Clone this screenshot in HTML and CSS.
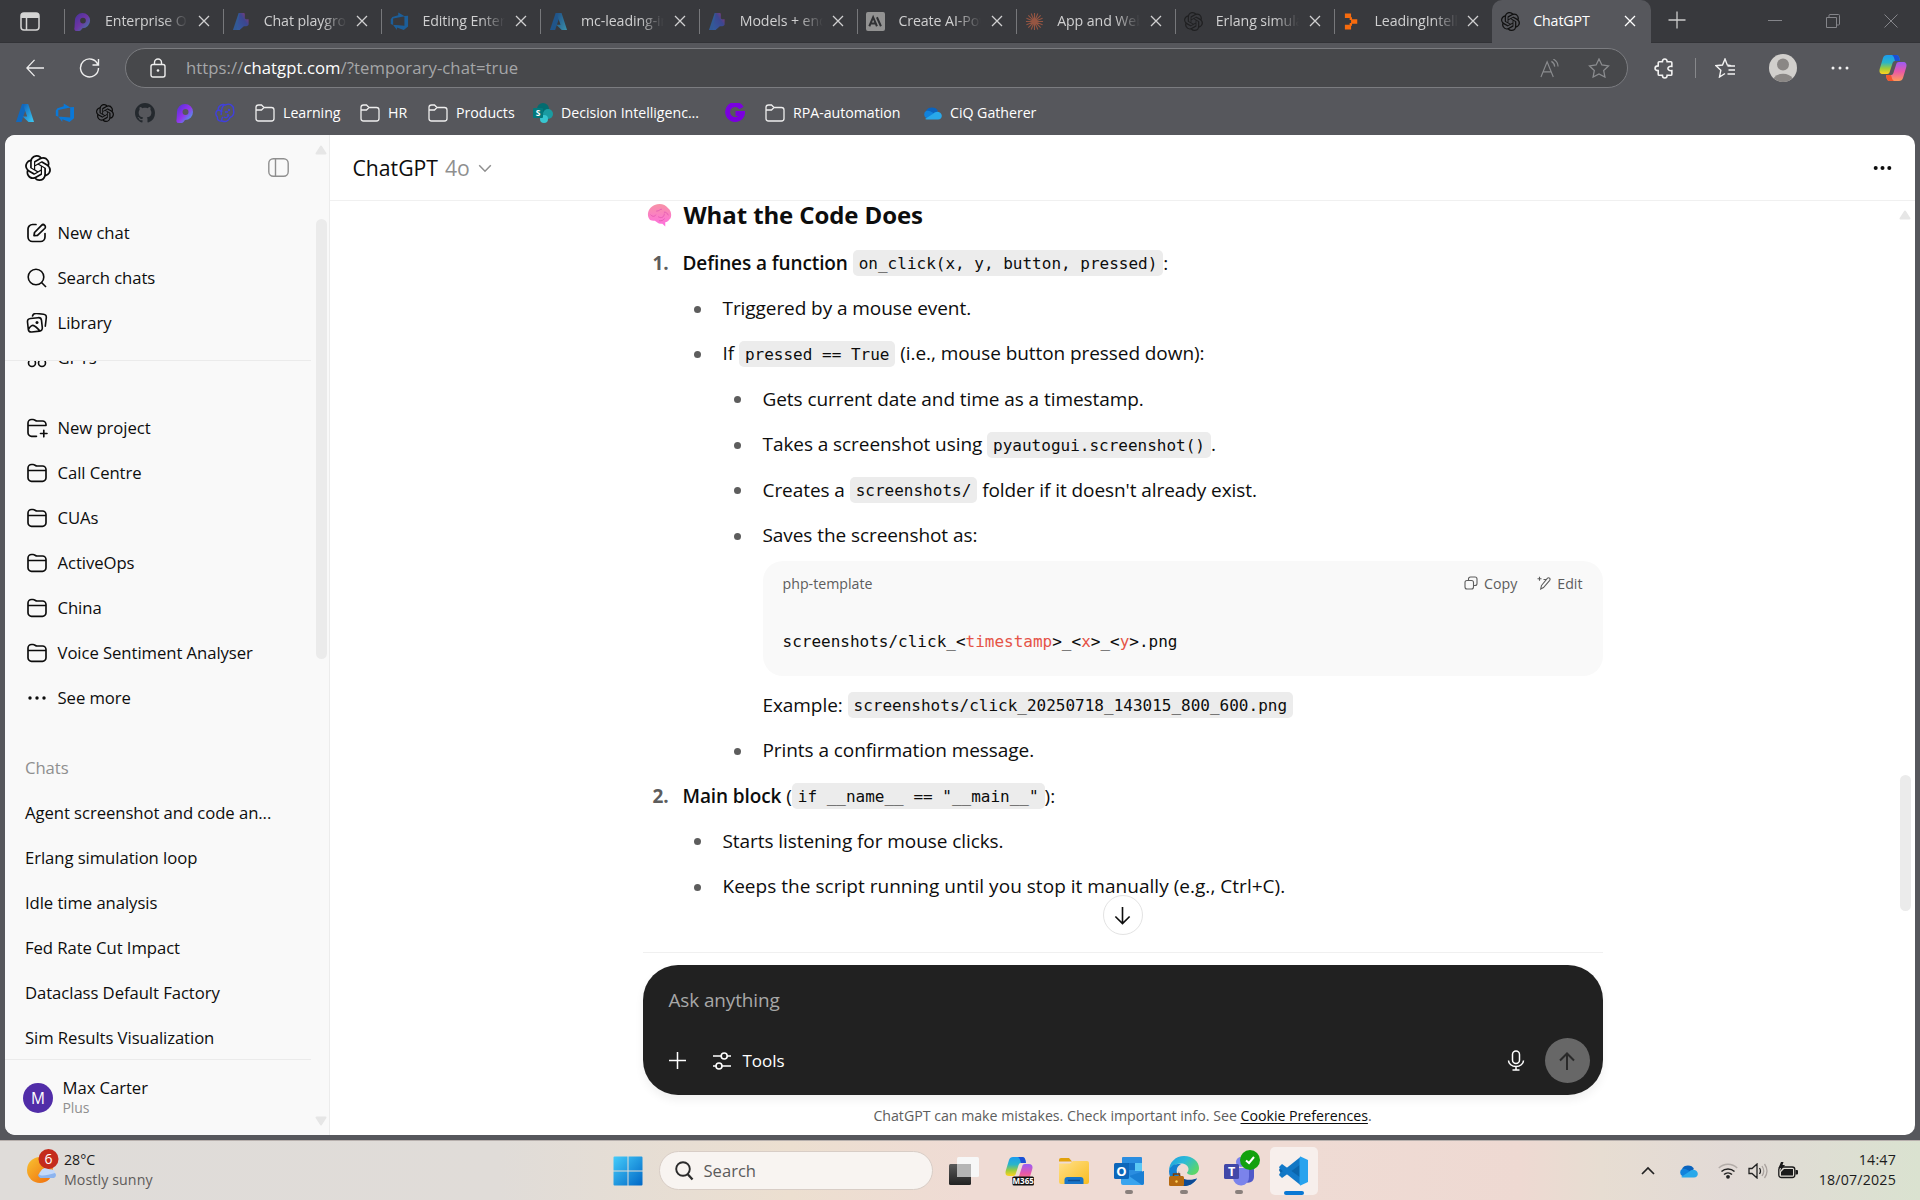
FILE: index.html
```html
<!DOCTYPE html>
<html lang="en">
<head>
<meta charset="utf-8">
<title>ChatGPT</title>
<link rel="stylesheet" href="styles.css">
</head>
<body>
<svg class="sprite" width="0" height="0" aria-hidden="true">
  <defs>
    <linearGradient id="g-loop" x1="0" y1="0" x2="1" y2="1"><stop offset="0" stop-color="#4b2fd6"/><stop offset=".5" stop-color="#9333ea"/><stop offset="1" stop-color="#35c7e8"/></linearGradient>
    <linearGradient id="g-az" x1="0" y1="0" x2="1" y2="1"><stop offset="0" stop-color="#0f5fb8"/><stop offset="1" stop-color="#3ccbf4"/></linearGradient>
    <linearGradient id="g-found" x1="0" y1="1" x2="1" y2="0"><stop offset="0" stop-color="#2f74e0"/><stop offset=".6" stop-color="#3f50c8"/><stop offset="1" stop-color="#e0338c"/></linearGradient>
    <linearGradient id="g-copa" x1="0" y1="0" x2="0" y2="1"><stop offset="0" stop-color="#1b9cf0"/><stop offset=".4" stop-color="#2ab5c8"/><stop offset=".7" stop-color="#9ccb3c"/><stop offset="1" stop-color="#ffd21f"/></linearGradient>
    <linearGradient id="g-copb" x1="0" y1="0" x2="0" y2="1"><stop offset="0" stop-color="#9a5cf5"/><stop offset=".5" stop-color="#e858a8"/><stop offset="1" stop-color="#ff9a5a"/></linearGradient>
    <linearGradient id="g-win" x1="0" y1="0" x2="1" y2="1"><stop offset="0" stop-color="#45ccfa"/><stop offset="1" stop-color="#0067c6"/></linearGradient>
    <linearGradient id="g-sun" x1="0" y1="0" x2="1" y2="1"><stop offset="0" stop-color="#f8c331"/><stop offset="1" stop-color="#f06a0c"/></linearGradient>
    <linearGradient id="g-fold" x1="0" y1="0" x2="1" y2="1"><stop offset="0" stop-color="#ffe08a"/><stop offset="1" stop-color="#f9bd20"/></linearGradient>
    <linearGradient id="g-edge" x1="0" y1="0" x2="1" y2=".6"><stop offset="0" stop-color="#1f9fe0"/><stop offset=".5" stop-color="#2cbad8"/><stop offset="1" stop-color="#5bd66a"/></linearGradient>
    <linearGradient id="g-brain" x1="0" y1="0" x2="0" y2="1"><stop offset="0" stop-color="#f792a6"/><stop offset="1" stop-color="#ff6fe0"/></linearGradient>
    <linearGradient id="g-dark" x1="0" y1="0" x2="0" y2="1"><stop offset="0" stop-color="#5a5a5a"/><stop offset="1" stop-color="#222"/></linearGradient>
  </defs>
  <symbol id="openai" viewBox="0 0 24 24"><path fill="currentColor" d="M22.2819 9.8211a5.9847 5.9847 0 0 0-.5157-4.9108 6.0462 6.0462 0 0 0-6.5098-2.9A6.0651 6.0651 0 0 0 4.9807 4.1818a5.9847 5.9847 0 0 0-3.9977 2.9 6.0462 6.0462 0 0 0 .7427 7.0966 5.98 5.98 0 0 0 .511 4.9107 6.051 6.051 0 0 0 6.5146 2.9001A5.9847 5.9847 0 0 0 13.2599 24a6.0557 6.0557 0 0 0 5.7718-4.2058 5.9894 5.9894 0 0 0 3.9977-2.9001 6.0557 6.0557 0 0 0-.7475-7.0729zm-9.022 12.6081a4.4755 4.4755 0 0 1-2.8764-1.0408l.1419-.0804 4.7783-2.7582a.7948.7948 0 0 0 .3927-.6813v-6.7369l2.02 1.1686a.071.071 0 0 1 .038.0615v5.5826a4.504 4.504 0 0 1-4.4945 4.4944zm-9.6607-4.1254a4.4708 4.4708 0 0 1-.5346-3.0137l.142.0852 4.783 2.7582a.7712.7712 0 0 0 .7806 0l5.8428-3.3685v2.3324a.0804.0804 0 0 1-.0332.0615L9.74 19.9502a4.4992 4.4992 0 0 1-6.1408-1.6464zM2.3408 7.8956a4.485 4.485 0 0 1 2.3655-1.9728V11.6a.7664.7664 0 0 0 .3879.6765l5.8144 3.3543-2.0201 1.1685a.0757.0757 0 0 1-.071 0l-4.8303-2.7865A4.504 4.504 0 0 1 2.3408 7.872zm16.5963 3.8558L13.1038 8.364 15.1192 7.2a.0757.0757 0 0 1 .071 0l4.8303 2.7913a4.4944 4.4944 0 0 1-.6765 8.1042v-5.6772a.79.79 0 0 0-.407-.667zm2.0107-3.0231l-.142-.0852-4.7735-2.7818a.7759.7759 0 0 0-.7854 0L9.409 9.2297V6.8974a.0662.0662 0 0 1 .0284-.0615l4.8303-2.7866a4.4992 4.4992 0 0 1 6.6802 4.66zM8.3065 12.863l-2.02-1.1638a.0804.0804 0 0 1-.038-.0567V6.0742a4.4992 4.4992 0 0 1 7.3757-3.4537l-.142.0805L8.704 5.459a.7948.7948 0 0 0-.3927.6813zm1.0976-2.3654l2.602-1.4998 2.6069 1.4998v2.9994l-2.5974 1.4997-2.6067-1.4997Z"/></symbol>
  <symbol id="x" viewBox="0 0 12 12"><path d="M1 1l10 10M11 1L1 11" stroke="currentColor" stroke-width="1.3" fill="none"/></symbol>
  <symbol id="loop" viewBox="0 0 20 20"><path fill="url(#g-loop)" fill-rule="evenodd" d="M10 1a8 8 0 1 1 0 16L8.500 19Q7.700 20 6.500 20H3.500C1.500 20 1 18 1.600 16L2 9a8 8 0 0 1 8-8zM10.500 6a3 3 0 1 0 0 6 3 3 0 0 0 0-6z"/></symbol>
  <symbol id="foundry" viewBox="0 0 20 20"><path fill="#2f6fd0" d="M7 1h5L8 19H1z"/><path fill="url(#g-found)" d="M8 1h4c1 0 1.500.5 1.500 1.500V6c0 1 .5 1.500 1.500 1.500h2.500V13c0 1-1 2-2.500 2h-2.500L8 19H5z"/></symbol>
  <symbol id="devops" viewBox="0 0 20 20"><path fill="#0a78d7" d="M19 4v11.200L14.500 19 7.300 16.300v2.600L3.200 13.500l12 1V4.300zM15.400 4.400 8.700.6v2.700L2.500 5.200.8 7.500v5.200l2.500 1.100V6.900z"/></symbol>
  <symbol id="azure" viewBox="0 0 20 20"><path fill="#1168bd" d="M7 1h5.500L6.500 19H1z"/><path fill="url(#g-az)" d="M8 1h5.200L19 19h-5.500L7.600 13.500h4.600L9.500 6z"/></symbol>
  <symbol id="folder" viewBox="0 0 20 20"><path fill="none" stroke="#eee" stroke-width="1.300" d="M1 4.500A2.500 2.500 0 0 1 3.500 2h3l2.500 2.500h7.500A2.500 2.500 0 0 1 19 7v8.500a2.500 2.500 0 0 1-2.500 2.500h-13A2.500 2.500 0 0 1 1 15.500zM1 7h5.500l2.500-2.500"/></symbol>
  <symbol id="cloud" viewBox="0 0 20 14"><path fill="#0b63bd" d="M4 5a6.500 5.500 0 0 1 12 0l-5 4z"/><path fill="#1182dc" d="M4 5c3-1 5 .5 7.500 2L18 12H4.500A4 4 0 0 1 4 5z"/><path fill="#28a8ea" d="M3 13l8.500-5.500C13 5.500 18 4.500 19.500 8.500 20.500 11 19 13.500 16 13.500H4.500z"/></symbol>
  <symbol id="proj" viewBox="0 0 22 20"><path fill="none" stroke="currentColor" stroke-width="1.650" stroke-linejoin="round" d="M2 7.500V5A3.500 3.500 0 0 1 5.500 1.500h1.600c1.500 0 2.400 1.500 4 1.500h5.400A3.500 3.500 0 0 1 20 6.500v8.300a3.500 3.500 0 0 1-3.500 3.500h-11A3.500 3.500 0 0 1 2 14.800V7.500h18"/></symbol>
  <symbol id="copilot" viewBox="0 0 28 28"><path fill="url(#g-copa)" d="M8 1h9c3 0 3.500 3 4 6h-5c-2 0-2.500 2-3 4l-2 6c-.5 2-1 3-3 3H4c-3 0-4-2-3.300-5L4 4c.6-2 2-3 4-3z"/><path fill="#1b4fd6" d="M13 1h4.500c2.500 0 3 3 3.500 6h-5c-1-3-1-5-3-6z"/><path fill="url(#g-copb)" d="M20 27h-9c-3 0-3.500-3-4-6h5c2 0 2.500-2 3-4l2-6c.5-2 1-3 3-3h4c3 0 4 2 3.300 5L24 24c-.6 2-2 3-4 3z"/><path fill="#f2562e" d="M15 27h-4.500c-2.500 0-3-3-3.500-6h5c1 3 1 5 3 6z"/></symbol>
</svg>

<div class="tabs">
  <svg class="tabmenu" viewBox="0 0 20 20"><rect x="1" y="2" width="18" height="17" rx="3" fill="none" stroke="#d4d4d4" stroke-width="1.500"/><path d="M1 7V4.500A2.500 2.500 0 0 1 3.500 2h13A2.500 2.500 0 0 1 19 4.500V7z" fill="#d4d4d4"/><path d="M6.500 7v12" stroke="#d4d4d4" stroke-width="1.500"/></svg>
  <div class="tab"><svg class="fav"><use href="#loop"/></svg><span>Enterprise Op</span><svg class="cls"><use href="#x"/></svg></div>
  <div class="tab"><svg class="fav"><use href="#foundry"/></svg><span>Chat playgrou</span><svg class="cls"><use href="#x"/></svg></div>
  <div class="tab"><svg class="fav"><use href="#devops"/></svg><span>Editing Enterp</span><svg class="cls"><use href="#x"/></svg></div>
  <div class="tab"><svg class="fav"><use href="#azure"/></svg><span>mc-leading-in</span><svg class="cls"><use href="#x"/></svg></div>
  <div class="tab"><svg class="fav"><use href="#foundry"/></svg><span>Models + end</span><svg class="cls"><use href="#x"/></svg></div>
  <div class="tab"><svg class="fav lit" viewBox="0 0 20 20"><rect width="20" height="20" rx="2" fill="#929292"/><path d="M3.500 15 7.500 5.500 11.500 15M5 12h5M11.500 5.500 15.700 15" fill="none" stroke="#303134" stroke-width="2.100"/></svg><span>Create AI-Pow</span><svg class="cls"><use href="#x"/></svg></div>
  <div class="tab"><svg class="fav lit" viewBox="-10 -10 20 20"><path d="M0-9V9M-9 0H9M-6.500-6.500 6.500 6.500M6.500-6.500-6.500 6.500M-3.500-8.500 3.500 8.500M3.500-8.500-3.500 8.500M-8.500-3.500 8.500 3.500M-8.500 3.500 8.500-3.500" stroke="#955542" stroke-width="1.200"/></svg><span>App and Web</span><svg class="cls"><use href="#x"/></svg></div>
  <div class="tab"><svg class="fav gpt"><use href="#openai"/></svg><span>Erlang simula</span><svg class="cls"><use href="#x"/></svg></div>
  <div class="tab"><svg class="fav lit" viewBox="0 0 20 20"><path fill="#f76b0e" d="M2 1.500h6.500v4.800H2zM2 13.500h6.500v4.800H2zM8.500 7.500H15v4.800H8.500z"/><path fill="#f76b0e" d="M7 5.500h2.500v3H7zM7 11.500h2.500v3H7z"/></svg><span>LeadingIntelli</span><svg class="cls"><use href="#x"/></svg></div>
  <div class="tab active"><svg class="fav gpt lit"><use href="#openai"/></svg><span>ChatGPT</span><svg class="cls"><use href="#x"/></svg></div>
  <svg class="plus" viewBox="0 0 18 18"><path d="M9 .5v17M.5 9h17" stroke="#ccc" stroke-width="1.300"/></svg>
  <div class="wincontrols">
    <svg viewBox="0 0 14 14"><path d="M0 6.500h14" stroke="#84858a"/></svg>
    <svg viewBox="0 0 14 14"><path d="M.5 3.500h10v10H.5zM3 3V1.500Q3 .5 4 .5h8.500q1 0 1 1V10q0 1-1 1H11" fill="none" stroke="#84858a"/></svg>
    <svg viewBox="0 0 14 14"><path d="M.5.5l13 13M13.500.5l-13 13" stroke="#84858a"/></svg>
  </div>
</div>

<div class="toolbar">
  <svg class="back" viewBox="0 0 20 20"><path d="M20 10H1M9.500 1 1 10l8.500 9" fill="none" stroke="#eee" stroke-width="1.400"/></svg>
  <svg class="reload" viewBox="0 0 20 20"><path d="M18.500 7A9 9 0 1 0 19 10M19 1v6h-6" fill="none" stroke="#eee" stroke-width="1.400"/></svg>
  <div class="address">
    <svg class="lock" viewBox="0 0 16 20"><rect x="1" y="6.500" width="14" height="12.500" rx="2" fill="none" stroke="#eee" stroke-width="1.400"/><path d="M4.500 6.500V4.500a3.500 3.500 0 0 1 7 0v2" fill="none" stroke="#eee" stroke-width="1.400"/><circle cx="8" cy="12.500" r="1.300" fill="#eee"/></svg>
    <span class="url">https://<b>chatgpt.com</b>/?temporary-chat=true</span>
    <svg class="read" viewBox="0 0 20 20"><path d="M1 19 7.500 3 14 19M3.300 13.500h8.400M12 2.500c2 1 3.300 3 3.500 5.500M14 0c3 1.700 5 4.700 5 8" fill="none" stroke="#8b8c8f" stroke-width="1.200"/></svg>
    <svg class="star" viewBox="0 0 22 20"><path d="M11 1l2.900 6 6.600.9-4.800 4.600 1.200 6.500L11 15.900 5.100 19l1.200-6.500L1.500 7.900 8.100 7z" fill="none" stroke="#8b8c8f" stroke-width="1.300"/></svg>
  </div>
  <svg class="ext" viewBox="0 0 20 20"><path d="M6 3.500h2C8 0 12.500 0 12.500 3.500H16q1 0 1 1V8c-5-.8-5 4.800 0 4v3.500q0 1-1 1h-3.500c0 3.500-4.500 3.500-4.500 0H5q-1 0-1-1V12c-4 0-4-4.500 0-4.500v-3q0-1 1-1z" fill="none" stroke="#f2f2f2" stroke-width="1.500"/></svg>
  <i class="vline"></i>
  <svg class="favs" viewBox="0 0 21 20"><path d="M16 7.800 12.300 7 10 1 7.500 7 1 7.700l4.800 4.600L4.500 19 10 15.500M12.500 8H20M13.500 12H20M12.500 16H20" fill="none" stroke="#f2f2f2" stroke-width="1.400"/></svg>
  <svg class="me" viewBox="0 0 28 28"><circle cx="14" cy="14" r="14" fill="#d1cfcc"/><circle cx="14" cy="10.500" r="6" fill="#8a8785"/><path d="M4.500 24.300a10.500 8 0 0 1 19 0A14 14 0 0 1 4.500 24.300z" fill="#8a8785"/></svg>
  <svg class="more" viewBox="0 0 18 4"><g fill="#f2f2f2"><circle cx="2" cy="2" r="1.500"/><circle cx="9" cy="2" r="1.500"/><circle cx="16" cy="2" r="1.500"/></g></svg>
  <svg class="cop"><use href="#copilot"/></svg>
</div>

<div class="bookmarks">
  <svg><use href="#azure"/></svg>
  <svg><use href="#devops"/></svg>
  <svg class="dark"><use href="#openai"/></svg>
  <svg viewBox="0 0 16 16"><path fill="#24292e" d="M8 0C3.580 0 0 3.580 0 8c0 3.540 2.290 6.530 5.470 7.590.4.070.55-.17.55-.38 0-.19-.01-.82-.01-1.490-2.010.37-2.530-.49-2.690-.94-.09-.23-.48-.94-.82-1.130-.28-.15-.68-.52-.01-.53.63-.01 1.080.58 1.230.82.72 1.210 1.870.87 2.330.66.070-.52.28-.87.51-1.070-1.780-.2-3.640-.89-3.640-3.950 0-.87.31-1.590.82-2.150-.08-.2-.36-1.020.08-2.120 0 0 .67-.21 2.200.82.64-.18 1.320-.27 2-.27s1.360.09 2 .27c1.530-1.040 2.200-.82 2.200-.82.44 1.100.16 1.920.08 2.120.51.56.82 1.270.82 2.150 0 3.070-1.870 3.750-3.650 3.950.29.25.54.73.54 1.480 0 1.070-.01 1.930-.01 2.200 0 .21.15.46.55.38A8.010 8.010 0 0 0 16 8c0-4.420-3.580-8-8-8z"/></svg>
  <svg><use href="#loop"/></svg>
  <svg viewBox="0 0 20 20"><path d="M7 18c-3 .5-5-1-4.500-4C0 12 .5 8 3 7c0-4 4-6.500 7.500-5C15-.5 19 3 18.500 7c1 4-1 6.500-3.500 7.500-2 4-5.500 4.500-8 3.500zM9 2c-2 2-3 4-2 7m-4-2c3 0 4 2 3 5m4-3h3m-1 3h2m-5 2c2 1.500 4 0 5-2M7 18c-1-2 0-3 1-4" fill="none" stroke="#4040dc" stroke-width="1.400"/><circle cx="14" cy="7" r="1.200" fill="#4040dc"/></svg>
  <div class="bm b1"><svg><use href="#folder"/></svg>Learning</div>
  <div class="bm b2"><svg><use href="#folder"/></svg>HR</div>
  <div class="bm b3"><svg><use href="#folder"/></svg>Products</div>
  <div class="bm b4"><svg viewBox="0 0 20 20"><circle cx="10" cy="6" r="6" fill="#036c70"/><circle cx="15" cy="11" r="5" fill="#1a9ba1"/><circle cx="11" cy="16" r="4" fill="#37c6d0"/><rect x="0" y="5" width="10" height="10" rx="1" fill="#03787c"/><text x="5" y="13" font-size="8.500" text-anchor="middle" fill="#fff" font-weight="700">S</text></svg>Decision Intelligenc...</div>
  <svg class="gee" viewBox="0 0 20 20"><path d="M16.500 5A7.500 7.500 0 1 0 17.500 10.500H10.500" fill="none" stroke="#7a00df" stroke-width="5"/></svg>
  <div class="bm b5"><svg><use href="#folder"/></svg>RPA-automation</div>
  <div class="bm b6"><svg><use href="#cloud"/></svg>CiQ Gatherer</div>
</div>

<div class="page">
  <aside class="side">
    <div class="sidecol">
      <div class="sidehead">
        <svg class="logo"><use href="#openai"/></svg>
        <svg class="toggle" viewBox="0 0 21 19"><rect x=".8" y=".8" width="19.400" height="17.400" rx="4.500" fill="none" stroke="#8f8f8f" stroke-width="1.400"/><path d="M7.500 1v17" stroke="#8f8f8f" stroke-width="1.400"/></svg>
      </div>
      <div class="row"><svg viewBox="0 0 22 20"><path d="M10 1.500H6.500A4.500 4.500 0 0 0 2 6v8a4.500 4.500 0 0 0 4.500 4.500h8A4.500 4.500 0 0 0 19 14v-3.500M8 12.700l.5-3.200 7-7.200a2.200 2.200 0 0 1 3.200 3.200l-7.200 6.800z" fill="none" stroke="currentColor" stroke-width="1.700" stroke-linejoin="round" stroke-linecap="round"/></svg>New chat</div>
      <div class="row"><svg viewBox="0 0 22 20"><circle cx="10" cy="9" r="7.800" fill="none" stroke="currentColor" stroke-width="1.600"/><path d="M15.500 14.500l4.500 4.500" stroke="currentColor" stroke-width="1.600"/></svg>Search chats</div>
      <div class="row"><svg viewBox="0 0 22 20"><path d="M4.500 5.500 12 4.700c2-.2 3.300.8 3.500 2.700l.8 7.200c.2 2-.8 3.300-2.800 3.500l-7.700.9c-2 .2-3.300-.8-3.500-2.700L1.500 9c-.2-2 .9-3.300 3-3.500zM2.300 16.500c2-3.500 4-5 6.200-3.500 2 1.200 3 2.500 5.500 5M6.500 3C7 1 8.500.3 10.500.5l7 .7c2 .2 3 1.500 2.800 3.500l-1 8.500" fill="none" stroke="currentColor" stroke-width="1.600" stroke-linecap="round"/><circle cx="11" cy="9.500" r="1.500" fill="currentColor"/></svg>Library</div>
      <div class="scroller">
        <div class="row clipped"><svg viewBox="0 0 22 20"><g fill="none" stroke="currentColor" stroke-width="1.600"><circle cx="6" cy="5" r="3.500"/><circle cx="16" cy="5" r="3.500"/><circle cx="6" cy="15" r="3.500"/><circle cx="16" cy="15" r="3.500"/></g></svg>GPTs</div>
        <div class="row gapped"><svg viewBox="0 0 22 20"><path fill="none" stroke="currentColor" stroke-width="1.650" stroke-linecap="round" stroke-linejoin="round" d="M10.500 18.300h-5A3.500 3.500 0 0 1 2 14.800V5A3.500 3.500 0 0 1 5.500 1.500h1.600c1.500 0 2.400 1.500 4 1.500h5.400A3.500 3.500 0 0 1 20 6.500v1H2M14.500 15.500h6.500M17.800 12.300v6.500"/></svg>New project</div>
        <div class="row"><svg><use href="#proj"/></svg>Call Centre</div>
        <div class="row"><svg><use href="#proj"/></svg>CUAs</div>
        <div class="row"><svg><use href="#proj"/></svg>ActiveOps</div>
        <div class="row"><svg><use href="#proj"/></svg>China</div>
        <div class="row"><svg><use href="#proj"/></svg>Voice Sentiment Analyser</div>
        <div class="row"><svg viewBox="0 0 22 20"><g fill="currentColor"><circle cx="4" cy="10" r="1.700"/><circle cx="11" cy="10" r="1.700"/><circle cx="18" cy="10" r="1.700"/></g></svg>See more</div>
        <div class="row plain label">Chats</div>
        <div class="row plain">Agent screenshot and code an...</div>
        <div class="row plain">Erlang simulation loop</div>
        <div class="row plain">Idle time analysis</div>
        <div class="row plain">Fed Rate Cut Impact</div>
        <div class="row plain">Dataclass Default Factory</div>
        <div class="row plain">Sim Results Visualization</div>
      </div>
      <div class="user"><span class="avatar">M</span><div><div class="name">Max Carter</div><div class="plan">Plus</div></div></div>
    </div>
    <div class="bar sidebar-scroll"><svg viewBox="0 0 12 10"><path d="M6 1.500 10.500 8.500h-9z" fill="#e6e6e6" stroke="#e6e6e6" stroke-width="2" stroke-linejoin="round"/></svg><i></i><svg viewBox="0 0 12 10"><path d="M6 8.500 1.500 1.500h9z" fill="#e6e6e6" stroke="#e6e6e6" stroke-width="2" stroke-linejoin="round"/></svg></div>
  </aside>

  <main class="main">
    <header class="top"><span class="model">ChatGPT</span><span class="ver">4o</span><svg class="chev" viewBox="0 0 14 9"><path d="M1.200 1.200 7 7.200l5.800-6" fill="none" stroke="#8f8f8f" stroke-width="1.500"/></svg><svg class="dots" viewBox="0 0 18 4"><g fill="#0d0d0d"><circle cx="2.200" cy="2" r="2"/><circle cx="9" cy="2" r="2"/><circle cx="15.800" cy="2" r="2"/></g></svg></header>
    <div class="body">
      <div class="thread">
        <h3><svg viewBox="0 0 26 24"><path fill="url(#g-brain)" d="M3 17C-1 13 1 4 8 1.500c5-2 11-1 14 3.500 4 3 4 10 1 12-2 3-4 2-4 3l0 4-3-3c-4 1-6-2-8-3-2 0-4 0-5-1z"/><path d="M4 12c2 2 4 2 5 0M10 8c3 0 3-2 5-2M12 14c3 2 6 0 6-3M18 9c2 0 3 1 4 3M13 18c2 0 4 0 5-2" fill="none" stroke="#e55cb4" stroke-width="1" stroke-linecap="round"/></svg>What the Code Does</h3>
        <p class="ln l0"><b class="num">1.</b><b>Defines a function</b>&nbsp;<code>on_click(x, y, button, pressed)</code>:</p>
        <p class="ln l1">Triggered by a mouse event.</p>
        <p class="ln l1">If <code>pressed == True</code> (i.e., mouse button pressed down):</p>
        <p class="ln l2">Gets current date and time as a timestamp.</p>
        <p class="ln l2">Takes a screenshot using <code>pyautogui.screenshot()</code>.</p>
        <p class="ln l2">Creates a <code>screenshots/</code> folder if it doesn't already exist.</p>
        <p class="ln l2">Saves the screenshot as:</p>
        <div class="block">
          <div class="blockhead"><span>php-template</span>
            <svg class="ic" viewBox="0 0 14 14"><rect x="1" y="4.500" width="8.500" height="8.500" rx="2" fill="none" stroke="#5d5d5d" stroke-width="1.100"/><path d="M4.500 4V3a2 2 0 0 1 2-2H11a2 2 0 0 1 2 2v4.500a2 2 0 0 1-2 2h-1" fill="none" stroke="#5d5d5d" stroke-width="1.100"/></svg><span>Copy</span>
            <svg class="ic ed" viewBox="0 0 14 14"><path d="M4.500 9.500 10.500 2.200Q11.500 1.300 12.600 2.200 13.500 3.200 12.700 4.300L6.500 11.500 3.700 13zM6.500 3.500H9.500M2.500.8v4M.5 2.800h4" fill="none" stroke="#5d5d5d" stroke-width="1.100"/></svg><span>Edit</span>
          </div>
          <pre>screenshots/click_&lt;<em>timestamp</em>&gt;_&lt;<em>x</em>&gt;_&lt;<em>y</em>&gt;.png</pre>
        </div>
        <p class="ln l2 nodot">Example: <code>screenshots/click_20250718_143015_800_600.png</code></p>
        <p class="ln l2">Prints a confirmation message.</p>
        <p class="ln l0"><b class="num">2.</b><b>Main block</b>&nbsp;(<code>if __name__ == "__main__"</code>):</p>
        <p class="ln l1">Starts listening for mouse clicks.</p>
        <p class="ln l1 wide">Keeps the script running until you stop it manually (e.g., Ctrl+C).</p>
        <div class="down"><svg viewBox="0 0 20 20"><path d="M10 1v17M2.500 11l7.500 7.500 7.500-7.500" fill="none" stroke="#0d0d0d" stroke-width="1.700"/></svg></div>
      </div>
      <div class="composer">
        <div class="ask">Ask anything</div>
        <div class="actions">
          <svg class="add" viewBox="0 0 18 18"><path d="M9 0v18M0 9h18" stroke="#fff" stroke-width="1.600"/></svg>
          <svg class="tl" viewBox="0 0 20 20"><g fill="none" stroke="#fff" stroke-width="1.600"><path d="M1 5h8M15 5h4M1 15h3M10 15h9"/><circle cx="12.200" cy="5" r="3"/><circle cx="7" cy="15" r="3"/></g></svg>
          <span>Tools</span>
          <svg class="mic" viewBox="0 0 18 21"><rect x="5.500" y=".9" width="7" height="12.500" rx="3.500" fill="none" stroke="#fff" stroke-width="1.500"/><path d="M1.500 10.500a7.500 6 0 0 0 15 0M9 16.500V20M5.500 20h7" fill="none" stroke="#fff" stroke-width="1.500"/></svg>
          <div class="send"><svg viewBox="0 0 18 18"><path d="M9 18V2M2 8.500 9 1.500l7 7" fill="none" stroke="#2a2a2a" stroke-width="2"/></svg></div>
        </div>
      </div>
      <div class="note">ChatGPT can make mistakes. Check important info. See <u>Cookie Preferences</u>.</div>
      <div class="bar main-scroll"><svg viewBox="0 0 12 10"><path d="M6 1.500 10.500 8.500h-9z" fill="#e6e6e6" stroke="#e6e6e6" stroke-width="2" stroke-linejoin="round"/></svg><i></i></div>
    </div>
  </main>
</div>

<footer class="taskbar">
  <svg class="wx" viewBox="0 0 34 36"><circle cx="14" cy="21" r="13" fill="url(#g-sun)"/><path d="M15 29a4 4 0 0 1-.500-6.500 6 6 0 0 1 9.500-2A4 4 0 0 1 29 24a3 3 0 0 1-1 5z" fill="#c3d9fa"/><path d="M15 29a4 4 0 0 1-3-4c4 3 9 1 17-1a3 3 0 0 1-1 5z" fill="#8db4ee"/><circle cx="22.500" cy="10" r="10" fill="#c42b1c"/><text x="22.500" y="15" font-size="14" text-anchor="middle" fill="#fff">6</text></svg>
  <div class="weather"><div>28°C</div><div class="dim">Mostly sunny</div></div>
  <svg class="start" viewBox="0 0 30 30"><path d="M.5 1.500q0-1 1-1h13v14H.5zM15.500.5h13q1 0 1 1v13h-14zM.5 15.500h14v14h-13q-1 0-1-1zM15.500 15.500h14v13q0 1-1 1h-13z" fill="url(#g-win)"/></svg>
  <div class="search"><svg viewBox="0 0 20 20"><circle cx="9" cy="8" r="6.800" fill="none" stroke="#2b2b2b" stroke-width="1.900"/><path d="M13.500 13l5 5.500" stroke="#2b2b2b" stroke-width="2.300"/></svg>Search</div>
  <div class="app"><svg viewBox="0 0 30 30"><rect x="8" y="1" width="22" height="20" rx="1.500" fill="#f7f7f7"/><rect x="0" y="8" width="22" height="21" rx="1.500" fill="url(#g-dark)"/><path d="M8 8h14v13H8z" fill="#b5b5b5"/></svg></div>
  <div class="app"><svg viewBox="0 0 30 30"><use href="#copilot" width="30" height="28"/><rect x="8.500" y="20.500" width="21.500" height="9" rx="1.500" fill="#111"/><text x="19.200" y="28" font-size="8" text-anchor="middle" font-weight="700" fill="#fff">M365</text></svg></div>
  <div class="app"><svg viewBox="0 0 30 30"><path d="M0 4q0-2 2-2h8l3 3.500H0z" fill="#e2a10a"/><path d="M0 7.500h11l3-2.500h14q2 0 2 2v19q0 2-2 2H2q-2 0-2-2z" fill="url(#g-fold)"/><path d="M5.500 28v-4q0-3 3-3h13q3 0 3 3v4z" fill="#1774c8"/><path d="M9 24.500h12" stroke="#0c4e94" stroke-width="1.500"/></svg></div>
  <div class="app run"><svg viewBox="0 0 30 30"><path d="M8 2q0-1 1-1h18q1 0 1 1v18H8z" fill="#2a8de0"/><path d="M8 7h7v6H8z" fill="#0c5aa8"/><path d="M15 7h6v7h-6z" fill="#1873c9"/><path d="M21 7h7v8h-7z" fill="#5cc8f5"/><path d="M7 15l11 6 12-6v12q0 2-2 2H9q-2 0-2-2z" fill="#3aa4ee"/><path d="M30 15v12q0 2-2 2L15 20z" fill="#1a7fd4"/><rect x="0" y="7" width="15" height="16" rx="1.500" fill="#0c66ba"/><text x="7.500" y="19.500" font-size="13" text-anchor="middle" font-weight="700" fill="#fff">O</text></svg></div>
  <div class="app run"><svg viewBox="0 0 30 30"><path d="M0 15C0 6 7 0 15 0c9 0 15 6 15 12 0 4-3 7-7 7-3 0-5-1-5-2.500 1-1 1.500-2 1.500-3.500 0-3-3-5.500-7-5.500C6 7.500 1 11 0 15z" fill="url(#g-edge)"/><path d="M0 15C1 10 6 7 12 8.500c-5 1-6 9-1 13 5 4 11 3.500 17 1C25 27.500 20 30 15 30 6 30 0 23 0 15z" fill="#1580d0"/><path d="M10 15c0 7 7 11 18 7.500C25 27.500 20 30 15 30c-4-2-7-9-5-15z" fill="#0d4a94"/><rect x="0" y="20" width="15" height="10" rx="1.500" fill="#b66a10"/><path d="M4.500 20v-2h6v2" fill="none" stroke="#7a3d06" stroke-width="1.500"/><circle cx="7.500" cy="25.500" r="1.200" fill="#ffd35c"/></svg></div>
  <div class="app run"><svg viewBox="0 0 30 30"><circle cx="17" cy="6" r="5" fill="#7b83eb"/><circle cx="26" cy="9" r="3.500" fill="#5059c9"/><path d="M19 13h11v8a6 6 0 0 1-9 5z" fill="#5059c9"/><path d="M9 12h16v9a8 8 0 0 1-16 1z" fill="#7b83eb"/><rect x="0" y="8" width="15" height="15" rx="1.500" fill="#4147a8"/><text x="7.500" y="20" font-size="12.500" text-anchor="middle" font-weight="700" fill="#fff">T</text></svg><svg class="tick" viewBox="0 0 20 20"><circle cx="10" cy="10" r="10" fill="#13a10e"/><path d="M6 10.500 9 13l5-6" fill="none" stroke="#fff" stroke-width="2"/></svg></div>
  <div class="app on"><svg viewBox="0 0 30 30"><path d="M22 1 3 18.500.5 17Q-.3 16 .5 15L2.500 11l19.500 14z" fill="#0b65ac" transform="matrix(1 0 0 -1 0 30)"/><path d="M22 8 3 22 .5 19.500Q-.2 18.500.7 17.500L22 .5z" fill="#1377c4"/><path d="M22 22 3 8 .5 10.500Q-.2 11.500.7 12.500L22 29.500z" fill="#1279c9"/><path d="M21.500.5 29 4v22l-7.500 3.500Q20.500 28.500 20.500 27V3q0-1.500 1-2.500z" fill="#28a3ee"/></svg></div>
  <div class="tray">
    <svg class="up" viewBox="0 0 14 9"><path d="M1 8l6-6 6 6" fill="none" stroke="#222" stroke-width="1.700"/></svg>
    <svg class="od"><use href="#cloud"/></svg>
    <svg class="wifi" viewBox="0 0 20 16"><g fill="none" stroke="#222" stroke-width="1.500"><path d="M.800 5a13 13 0 0 1 18.400 0" stroke="#b3aca8"/><path d="M3.500 8.500a9.500 9.500 0 0 1 13 0M6 11.500a6 6 0 0 1 8 0"/></g><circle cx="10" cy="13.800" r="1.900" fill="#222"/></svg>
    <svg class="vol" viewBox="0 0 20 16"><path d="M1 5.500h3L9 1v14l-5-4.500H1zM11.500 5q2 3 0 6" fill="none" stroke="#222" stroke-width="1.300"/><path d="M14 3q3.500 5 0 10M16.500 1q5 7 0 14" fill="none" stroke="#aaa39f" stroke-width="1.300"/></svg>
    <svg class="bat" viewBox="0 0 20 17"><rect x=".8" y="5" width="16" height="10.500" rx="2.500" fill="none" stroke="#1a1a1a" stroke-width="1.300"/><path d="M6 7h9v6.500H3V10zM17.500 8h1.500q1 0 1 1v2.500q0 1-1 1h-1.500zM3 0h2.500L4.500 3H7L2 9.500 3 6H.5z" fill="#1a1a1a"/></svg>
  </div>
  <div class="clock"><div>14:47</div><div>18/07/2025</div></div>
</footer>
</body>
</html>
```
FILE: styles.css
```css
* { box-sizing: border-box; }
body { margin: 0; width: 1920px; height: 1200px; overflow: hidden; background: #56575c; font-family: "Open Sans", "Noto Sans", sans-serif; color: #0d0d0d; font-size: 14.2px; display: flex; flex-direction: column; }
svg { display: block; flex: none; }
.sprite { position: absolute; }

/* Tab strip */
.tabs { height: 43px; background: #38393d; display: flex; align-items: center; flex: none; color: #d0d0d1; border-bottom: 1px solid #323337; }
.tabmenu { width: 20px; height: 20px; margin: 0 24px 0 20px; }
.tab { width: 158.700px; height: 43px; flex: none; display: flex; align-items: center; position: relative; padding: 0 13px 0 10px; }
.tab::before { content: ""; width: 1px; height: 25px; background: #77787b; margin: 0 8px 0 -10px; flex: none; }
.tab .fav { width: 19px; height: 19px; opacity: .6; margin-right: 13px; }
.tab .fav.lit { opacity: 1; }
.tab .gpt { color: #101010; }
.tab span { width: 83px; overflow: hidden; white-space: nowrap; -webkit-mask-image: linear-gradient(90deg, #000 70%, transparent); mask-image: linear-gradient(90deg, #000 70%, transparent); letter-spacing: -.1px; margin-bottom: 1px; }
.tab .cls { width: 12px; height: 12px; margin-left: auto; }
.tab.active { background: #56575c; border-radius: 10px 10px 0 0; color: #fff; padding-right: 15px; }
.tab.active::before { visibility: hidden; }
.tab.active span { -webkit-mask-image: none; mask-image: none; }
.plus { width: 18px; height: 18px; margin-left: 17px; margin-bottom: 2px; }
.wincontrols { display: flex; gap: 44px; margin-left: auto; padding-right: 22px; }
.wincontrols svg { width: 14px; height: 14px; }

/* Toolbar */
.toolbar { height: 50px; display: flex; align-items: center; flex: none; }
.back { width: 20px; height: 18px; margin-left: 25px; }
.reload { width: 21px; height: 20px; margin-left: 34px; }
.address { width: 1503px; height: 40px; margin-left: 25px; border: 1px solid #7b7c80; border-radius: 20px; background: #47484b; display: flex; align-items: center; color: #a5a6a8; font-size: 16.700px; flex: none; }
.lock { width: 16px; height: 20px; margin-left: 24px; }
.url { margin: 0 0 2px 20px; flex: 1; letter-spacing: .06px; }
.url b { color: #fff; font-weight: 400; }
.read { width: 19px; height: 19px; margin-right: 29px; }
.star { width: 22px; height: 20px; margin-right: 17px; }
.ext { width: 21px; height: 21px; margin-left: 26px; }
.vline { width: 1px; height: 20px; background: #87888b; margin-left: 20px; }
.favs { width: 21px; height: 20px; margin-left: 19px; }
.me { width: 28px; height: 28px; margin-left: 33px; }
.more { width: 18px; height: 4px; margin-left: 34px; }
.cop { width: 28px; height: 28px; margin-left: 30px; }

/* Favourites bar */
.bookmarks { height: 42px; display: flex; align-items: center; padding: 0 0 2px 15px; color: #fff; flex: none; }
.bookmarks svg { width: 20px; height: 20px; margin-right: 20px; }
.bookmarks .dark { color: #0b0b0b; width: 18px; margin: 0 21px 0 1px; }
.bm { display: flex; align-items: center; white-space: nowrap; flex: none; margin-bottom: 2px; letter-spacing: -.03px; }
.bookmarks .bm svg { margin: 2px 8px 0 0; }
.b1 { width: 105px; }
.b2 { width: 68px; }
.b3 { width: 105px; }
.b4 { width: 192px; }
.b5 { width: 157px; }

/* Browser viewport */
.page { width: 1910px; height: 1000px; margin-left: 5px; border-radius: 10px; overflow: hidden; background: #fff; display: flex; flex: none; }
.side { width: 325px; background: #f9f9f9; border-right: 1px solid #ececec; display: flex; flex: none; font-size: 16.700px; letter-spacing: -.07px; }
.sidecol { width: 306px; display: flex; flex-direction: column; }
.sidehead { height: 75px; display: flex; justify-content: space-between; padding: 20px 22px 0 20px; }
.logo { width: 26px; height: 26px; }
.toggle { width: 21px; height: 19px; margin-top: 3px; }
.row { height: 45px; display: flex; align-items: center; gap: 9.500px; padding-left: 21px; flex: none; white-space: nowrap; }
.row svg { width: 22px; height: 20px; }
.plain { padding-left: 20px; }
.label { color: #8f8f8f; margin-top: 25px; }
.scroller { height: 700px; margin-top: 15px; border-top: 1px solid #ebebeb; border-bottom: 1px solid #ebebeb; overflow: hidden; flex: none; }
.clipped { margin-top: -26px; }
.gapped { margin-top: 25px; }
.user { display: flex; align-items: center; gap: 9.500px; padding: 0 0 0 18px; height: 75px; }
.avatar { width: 30px; height: 30px; border-radius: 50%; background: #512da8; color: #fff; display: flex; align-items: center; justify-content: center; font-size: 15.500px; }
.name { line-height: 21px; }
.plan { font-size: 14px; line-height: 20px; color: #8f8f8f; }
.bar { display: flex; flex-direction: column; align-items: center; }
.bar svg { width: 12px; height: 10px; }
.bar i { width: 11px; border-radius: 6px; background: #ebebeb; }
.sidebar-scroll { width: 12px; margin-left: 4px; padding-top: 10px; }
.sidebar-scroll i { height: 440px; margin: 64px 0 457px; flex: none; }

/* Conversation */
.main { flex: 1; display: flex; flex-direction: column; }
.top { height: 66px; border-bottom: 1px solid #f0f0f0; display: flex; align-items: center; padding: 0 23px 0 22.500px; font-size: 21.200px; flex: none; }
.ver { color: #8f8f8f; margin-left: 7px; }
.chev { width: 14px; height: 9px; margin: 2px 0 0 8px; }
.dots { width: 19px; height: 4px; margin-left: auto; }
.body { flex: 1; position: relative; }
.thread { width: 960px; height: 752px; margin: 0 auto; border-bottom: 1px solid #f0f0f0; font-size: 19px; position: relative; }
h3 { margin: 0; height: 39px; padding-left: 4px; font-size: 24px; font-weight: 700; letter-spacing: -.1px; display: flex; align-items: center; gap: 12px; padding-bottom: 13px; }
h3 svg { width: 25px; height: 24px; margin-top: 2px; }
.ln { margin: 0; height: 45.400px; display: flex; align-items: center; white-space: pre; position: relative; letter-spacing: -.07px; }
.ln.wide { letter-spacing: .03px; }
.ln b { font-weight: 600; letter-spacing: -.1px; }
.ln b.num { width: 30px; color: #5d5d5d; font-weight: 700; }
.l0 { padding-left: 10px; }
.l1 { padding-left: 51px; }
.l2 { padding-left: 91px; }
.l1::before, .l2::before { content: ""; width: 7px; height: 7px; border-radius: 50%; background: #5d5d5d; margin: 2px 22px 0 0; }
.nodot::before { background: none; }
code, pre { font-family: "DejaVu Sans Mono", "Liberation Mono", monospace; font-size: 16px; letter-spacing: 0; }
code { background: #ececec; border-radius: 5px; padding: 0 6px; height: 26px; line-height: 27px; margin-top: 1px; }
.block { margin: 3px 0 6.400px 120px; height: 115px; background: #f9f9f9; border-radius: 20px; padding: 0 20px; }
.blockhead { display: flex; align-items: center; height: 45px; font-size: 14.200px; color: #5d5d5d; }
.blockhead .ic { width: 14px; height: 14px; margin: 0 6px 0 auto; }
.blockhead .ed { margin-left: 20px; }
pre { margin: 0; padding-top: 26px; line-height: 20px; }
em { font-style: normal; color: #e55347; }
.down { position: absolute; left: 460px; top: 694px; width: 40px; height: 40px; border: 1px solid #e3e3e3; border-radius: 50%; background: #fff; display: flex; align-items: center; justify-content: center; }
.down svg { width: 19px; height: 19px; }
.composer { width: 960px; height: 130px; margin: 12px auto 0; background: #212121; border-radius: 35px; color: #fff; padding: 0 13px 0 26px; box-shadow: 0 5px 10px rgba(0,0,0,.06); }
.ask { height: 73px; line-height: 71px; color: #a8a8a8; font-size: 18.900px; letter-spacing: -.1px; }
.actions { display: flex; align-items: center; height: 45px; font-size: 17px; }
.actions span { margin-bottom: 1px; }
.add { width: 17px; height: 17px; }
.tl { width: 20px; height: 20px; margin: 0 11px 0 26px; }
.mic { width: 18px; height: 21px; margin: 0 20px 0 auto; }
.send { width: 45px; height: 45px; border-radius: 50%; background: #676767; display: flex; align-items: center; justify-content: center; }
.send svg { width: 18px; height: 18px; }
.note { text-align: center; font-size: 14.200px; line-height: 20px; margin-top: 11px; color: #5d5d5d; letter-spacing: -.02px; }
.note u { color: #0d0d0d; text-underline-offset: 2px; }
.main-scroll { position: absolute; right: 4px; top: 9px; }
.main-scroll i { height: 136px; margin-top: 555px; }

/* Windows taskbar */
.taskbar { height: 60px; margin-top: 5px; border-top: 1px solid #b7b0ad; background: linear-gradient(90deg, #dfdcd9 0, #e0dcd8 500px, #ecdfd0 790px, #efdbd4 970px, #efdbd4 1300px, #eed9d2 1520px, #e7ddd2 1600px, #e2dad6 1730px, #dae2d0 1920px); display: flex; align-items: center; flex: none; color: #1c1c1c; }
.wx { width: 34px; height: 36px; margin-left: 26px; margin-bottom: 8px; }
.weather { margin: 0 0 2px 4px; width: 120px; line-height: 20px; }
.dim { color: #5e5b5a; letter-spacing: .1px; }
.start { width: 30px; height: 30px; margin-left: 428.500px; }
.search { width: 274px; height: 39px; border-radius: 20px; background: #f8f4f1; border: 1px solid #d8cdc6; margin-left: 16px; display: flex; align-items: center; padding-left: 14px; gap: 10px; font-size: 16.600px; color: #5b5b5b; }
.search svg { width: 20px; height: 20px; }
.app { width: 48px; height: 48px; margin-left: 7px; display: flex; align-items: center; justify-content: center; position: relative; border-radius: 5px; flex: none; }
.app > svg { width: 30px; height: 30px; }
.app.run::after, .app.on::after { content: ""; position: absolute; bottom: 1px; width: 8px; height: 4px; border-radius: 2px; background: #8a807c; }
.app.on { background: #f7efec; }
.app.on::after { width: 20px; background: #0a78d4; bottom: 0; }
.app .tick { position: absolute; width: 20px; height: 20px; left: 25px; top: 3px; }
.tray { margin-left: auto; display: flex; align-items: center; }
.up { width: 14px; height: 9px; margin-right: 23px; }
.od { width: 20px; height: 14px; margin-right: 20px; }
.wifi { width: 20px; height: 16px; margin-right: 10px; }
.vol { width: 20px; height: 16px; margin-right: 10px; }
.bat { width: 20px; height: 17px; }
.clock { width: 98px; text-align: right; line-height: 20px; margin: 0 24px 2px 0; letter-spacing: .2px; }
```
